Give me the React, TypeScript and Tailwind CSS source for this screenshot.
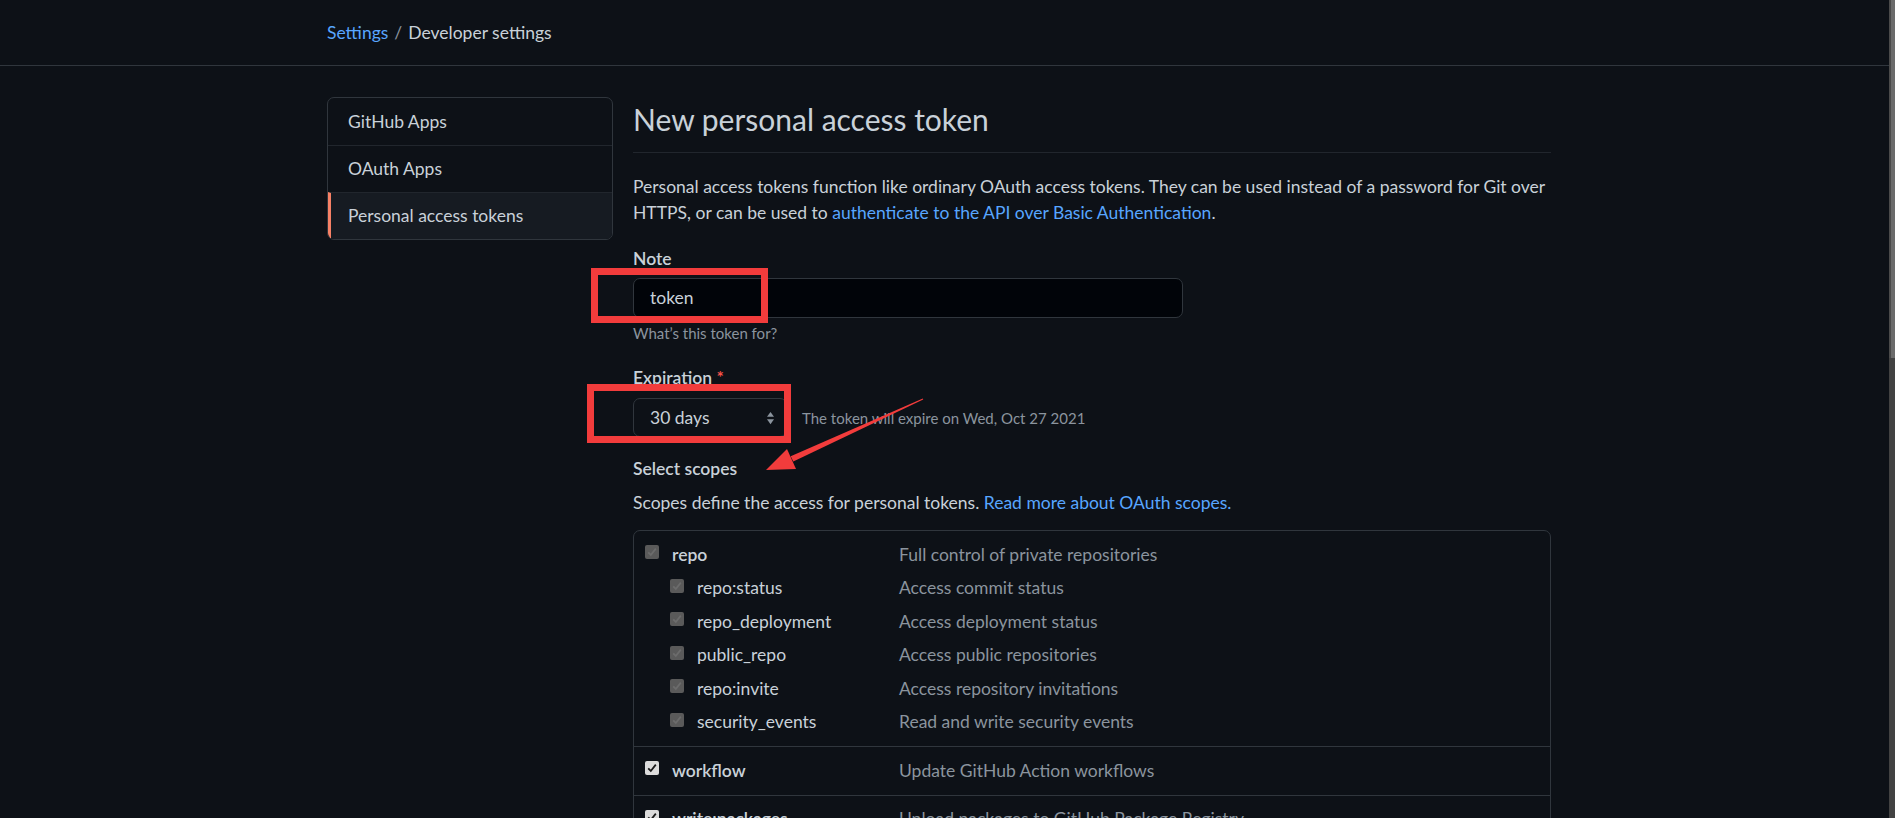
import React from 'react';

// scope rows of the first group, the parent "repo" and its children
const repoScopes = [
  { name: 'repo:status', desc: 'Access commit status' },
  { name: 'repo_deployment', desc: 'Access deployment status' },
  { name: 'public_repo', desc: 'Access public repositories' },
  { name: 'repo:invite', desc: 'Access repository invitations' },
  { name: 'security_events', desc: 'Read and write security events' },
];

const CheckMark = ({ color }: { color: string }) => (
  <svg viewBox="0 0 14 14" className="h-[14px] w-[14px]">
    <path d="M3.2 7.4 L5.8 10 L10.8 3.6" fill="none" stroke={color} strokeWidth="1.8" />
  </svg>
);

const Checkbox = ({ disabled }: { disabled?: boolean }) =>
  disabled ? (
    <span className="mb-[5px] flex h-[14px] w-[14px] shrink-0 items-center justify-center rounded-[2px] bg-[#5a5a5a]">
      <CheckMark color="#6c6c6c" />
    </span>
  ) : (
    <span className="mb-[5px] flex h-[14px] w-[14px] shrink-0 items-center justify-center rounded-[2px] bg-[#dcdcdc]">
      <CheckMark color="#1a1a1a" />
    </span>
  );

const ScopeRow = ({
  name,
  desc,
  sub,
  disabled,
}: {
  name: string;
  desc: string;
  sub?: boolean;
  disabled?: boolean;
}) => (
  <div className="flex h-[33.5px] items-center">
    <div className={`flex w-[254px] shrink-0 items-center gap-[13px] ${sub ? 'pl-[25px]' : ''}`}>
      <Checkbox disabled={disabled} />
      <span className={sub ? 'text-[#c9d1d9]' : 'font-semibold text-[#c9d1d9]'}>{name}</span>
    </div>
    <span className="text-[#8b949e]">{desc}</span>
  </div>
);

export default function App() {
  return (
    <div className="flex h-[818px] overflow-hidden bg-[#0d1117] font-['Segoe_UI',Lato,sans-serif] text-[17.5px] leading-[26px] text-[#c9d1d9]">
      <div className="relative min-w-0 flex-1">
        {/* breadcrumb */}
        <header className="flex h-[66px] items-center border-b border-[#30363d] pl-[327px]">
          <a className="text-[#58a6ff]">Settings</a>
          <span className="mx-[6px] text-[#8b949e]">/</span>
          <span>Developer settings</span>
        </header>

        <div className="flex gap-[20px] pl-[327px] pt-[31px]">
          {/* side menu */}
          <nav className="w-[286px] shrink-0 self-start overflow-hidden rounded-[7px] border border-[#30363d]">
            <div className="flex h-[47px] items-center px-[20px]">GitHub Apps</div>
            <div className="flex h-[47px] items-center border-t border-[#21262d] px-[20px]">OAuth Apps</div>
            <div className="flex h-[47px] items-center border-t border-[#21262d] border-l-[3px] border-l-[#f78166] bg-[#161b22] pl-[17px]">
              Personal access tokens
            </div>
          </nav>

          <main className="w-[918px]">
            <h2 className="border-b border-[#21262d] pb-[10px] text-[30px] leading-[45px] font-normal">
              New personal access token
            </h2>
            <p className="mt-[21px]">
              Personal access tokens function like ordinary OAuth access tokens. They can be used instead of a password for Git over
              <br />
              HTTPS, or can be used to <a className="text-[#58a6ff]">authenticate to the API over Basic Authentication</a>.
            </p>

            <div className="mt-[20px] font-semibold">Note</div>
            <div className="mt-[6px] flex h-[40px] w-[550px] items-center rounded-[7px] border border-[#30363d] bg-[#010409] px-[16px]">
              token
            </div>
            <div className="mt-[4px] text-[15px] leading-[22px] text-[#8b949e]">What’s this token for?</div>

            <div className="mt-[21px] font-semibold">
              Expiration <span className="text-[#f85149]">*</span>
            </div>
            <div className="mt-[7px] flex items-center">
              <div className="flex h-[39px] w-[154px] items-center justify-between rounded-[7px] border border-[#30363d] bg-[#0d1117] pl-[16px] pr-[11px]">
                <span>30 days</span>
                <svg viewBox="0 0 10 16" className="h-[14px] w-[9px]">
                  <path d="M5 1 L9 6.5 H1 Z" fill="#8b949e" />
                  <path d="M5 15 L9 9.5 H1 Z" fill="#8b949e" />
                </svg>
              </div>
              <span className="ml-[15px] text-[15px] text-[#8b949e]">The token will expire on Wed, Oct 27 2021</span>
            </div>

            <div className="mt-[19px] font-semibold">Select scopes</div>
            <p className="mt-[8px]">
              Scopes define the access for personal tokens. <a className="text-[#58a6ff]">Read more about OAuth scopes.</a>
            </p>

            <div className="mt-[14px] rounded-[7px] border border-[#30363d]">
              <div className="py-[7px] pl-[11px]">
                <ScopeRow name="repo" desc="Full control of private repositories" disabled />
                {repoScopes.map((s) => (
                  <ScopeRow key={s.name} name={s.name} desc={s.desc} sub disabled />
                ))}
              </div>
              <div className="border-t border-[#30363d] py-[7px] pl-[11px]">
                <ScopeRow name="workflow" desc="Update GitHub Action workflows" />
              </div>
              <div className="border-t border-[#30363d] py-[7px] pl-[11px]">
                <ScopeRow name="write:packages" desc="Upload packages to GitHub Package Registry" />
              </div>
            </div>
          </main>
        </div>

        {/* red annotations drawn over the screenshot */}
        <div className="pointer-events-none absolute left-[591px] top-[268px] h-[55px] w-[177px] border-[7px] border-[#f23c3c]" />
        <div className="pointer-events-none absolute left-[587px] top-[384px] h-[59px] w-[204px] border-[7px] border-[#f23c3c]" />
        <svg className="pointer-events-none absolute left-0 top-0 h-[818px] w-[1889px]" viewBox="0 0 1889 818">
          <polygon points="923.2,399.5 793.3,461.5 790.7,456.3 922.8,398.5" fill="#f23c3c" />
          <polygon points="766,470 796,469 787,449" fill="#f23c3c" />
        </svg>
      </div>

      {/* browser scrollbar */}
      <div className="flex w-[6px] shrink-0 flex-col bg-[#424242]">
        <div className="flex h-[358px] bg-[#4a4a4a]">
          <div className="ml-[2px] flex-1 bg-[#6b6b6b]" />
        </div>
      </div>
    </div>
  );
}
